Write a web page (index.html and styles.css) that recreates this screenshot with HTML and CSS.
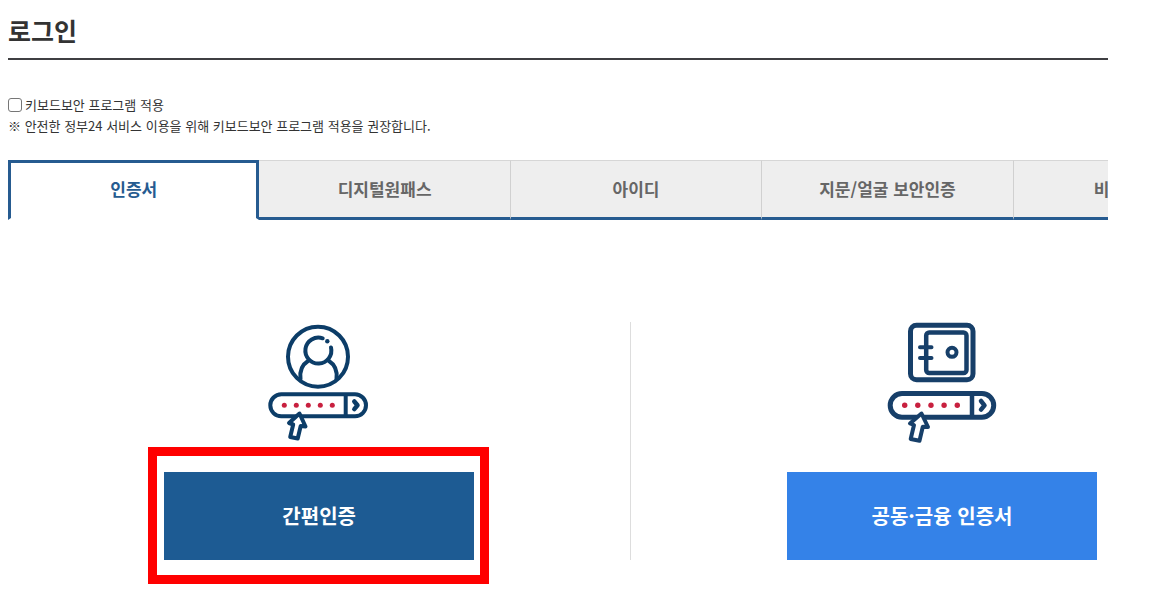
FILE: index.html
```html
<!DOCTYPE html>
<html lang="ko">
<head>
<meta charset="utf-8">
<title>로그인</title>
<link rel="stylesheet" href="styles.css">
</head>
<body>
<main class="page">
  <h1 class="title">로그인</h1>

  <div class="security">
    <label class="security-option"><input class="check" type="checkbox">키보드보안 프로그램 적용</label>
    <p class="security-note">※ 안전한 정부24 서비스 이용을 위해 키보드보안 프로그램 적용을 권장합니다.</p>
  </div>

  <nav class="tabs" role="tablist">
    <button class="tab tab-active" type="button" role="tab" aria-selected="true">인증서</button>
    <button class="tab" type="button" role="tab">디지털원패스</button>
    <button class="tab" type="button" role="tab">아이디</button>
    <button class="tab" type="button" role="tab">지문/얼굴 보안인증</button>
    <button class="tab tab-cut" type="button" role="tab">비</button>
  </nav>

  <div class="methods">
    <section class="method method-simple">
      <svg class="icon" viewBox="264 322 110 122" fill="none" stroke="#0c3d68" stroke-width="4" stroke-linecap="round" stroke-linejoin="round" aria-hidden="true">
        <circle cx="318" cy="356.7" r="30"/>
        <path d="M322.7 338.3A13 13 0 1 0 331 347.5"/>
        <circle cx="327.3" cy="341.3" r="2.2" fill="#0c3d68" stroke="none"/>
        <path d="M308 361C302.500 364.500 299.500 371 300.500 379M329 361C334.500 364.500 337.500 371 336.500 379"/>
        <rect x="270.300" y="394.300" width="95.700" height="22" rx="11"/>
        <path d="M345.700 395v21" stroke-linecap="butt"/>
        <path d="M354.300 401.500l3.200 3.800-3.200 3.800" stroke-width="4.500"/>
        <g fill="#c8203f" stroke="none">
          <circle cx="284.300" cy="405.300" r="2.500"/><circle cx="296.300" cy="405.300" r="2.500"/><circle cx="308.300" cy="405.300" r="2.500"/><circle cx="320.300" cy="405.300" r="2.500"/><circle cx="332.300" cy="405.300" r="2.500"/>
        </g>
        <path d="M299.500 413.500L289 423l4.200 1.500-3 12.500 7.500 1.500 3-12.500 4.800.5z" fill="#fff"/>
      </svg>
      <div class="action">
        <button class="method-button button-navy" type="button">간편인증</button>
        <span class="highlight"></span>
      </div>
    </section>

    <section class="method method-joint">
      <svg class="icon" viewBox="887 322 110 122" fill="none" stroke="#173f69" stroke-width="4" stroke-linecap="round" stroke-linejoin="round" aria-hidden="true">
        <rect x="910.500" y="325.200" width="62.500" height="54.500" rx="6" stroke-width="5"/>
        <rect x="926.200" y="332.500" width="40.300" height="40.500" rx="3" stroke-width="4.500"/>
        <circle cx="952" cy="352.300" r="4.500"/>
        <path d="M920 347.300h11.500M920 358h11.500"/>
        <rect x="890.200" y="393.500" width="103.500" height="23.700" rx="11.800" stroke-width="5"/>
        <path d="M972 394v23" stroke-linecap="butt" stroke-width="4.500"/>
        <path d="M981 401l3.500 4.300-3.500 4.300" stroke-width="4.500"/>
        <g fill="#c8203f" stroke="none">
          <circle cx="904.700" cy="405.300" r="2.700"/><circle cx="917.800" cy="405.300" r="2.700"/><circle cx="931" cy="405.300" r="2.700"/><circle cx="944.100" cy="405.300" r="2.700"/><circle cx="957.300" cy="405.300" r="2.700"/>
        </g>
        <path d="M921.500 413.500L910 423.500l4 1.500-3.300 14 8.800 1.800 3.300-14 5.200.2z" fill="#fff"/>
      </svg>
      <div class="action">
        <button class="method-button button-blue" type="button">공동·금융 인증서</button>
      </div>
    </section>
  </div>
</main>
</body>
</html>
```
FILE: styles.css
```css
* {
  box-sizing: border-box;
}

body {
  margin: 0;
  background: #fff;
  color: #333;
  font-family: "Noto Sans CJK KR", "Noto Sans", sans-serif;
}

button {
  margin: 0;
  padding: 0;
  border: 0;
  font: inherit;
  cursor: pointer;
}

.page {
  padding: 0 45px 36px 8px;
}

.title {
  margin: 0;
  padding: 12px 0 10px;
  border-bottom: 2px solid #3f3f42;
  font-size: 25px;
  font-weight: 700;
  line-height: 36px;
}

.security {
  padding: 34px 0 24px;
  font-size: 13px;
  line-height: 21px;
}

.security-option {
  display: flex;
  align-items: center;
  gap: 3px;
}

.check {
  appearance: none;
  width: 14px;
  height: 14px;
  margin: 0;
  border: 1px solid #767676;
  border-radius: 3px;
  background: #fff;
}

.check:checked {
  background: #1d5a92;
}

.security-note {
  margin: 0;
}

.tabs {
  display: grid;
  grid-template-columns: repeat(4, 8fr) 3fr;
}

.tab {
  height: 60px;
  padding-bottom: 2px;
  border-top: 1px solid #d6d6d6;
  border-right: 1px solid #d0d0d0;
  border-bottom: 3px solid #265b90;
  background: #eee;
  color: #666;
  font-size: 17px;
  font-weight: 700;
  white-space: nowrap;
}

.tab-active {
  padding-bottom: 4px;
  border: 3px solid #265b90;
  border-bottom-color: transparent;
  border-bottom-width: 2px;
  background: #fff;
  color: #265b90;
}

.tab-cut {
  overflow: hidden;
  padding-left: 80px;
  border-right: 0;
  text-align: left;
}

.methods {
  display: grid;
  grid-template-columns: 17fr 13fr;
  padding-top: 102px;
}

.method {
  display: flex;
  flex-direction: column;
  gap: 28px;
}

.method-simple {
  align-items: center;
  border-right: 1px solid #ddd;
}

.method-joint {
  align-items: flex-end;
  padding-right: 11px;
}

.icon {
  width: 110px;
  height: 122px;
}

.method-joint .icon {
  margin-right: 100px;
}

.action {
  position: relative;
}

.method-button {
  width: 310px;
  height: 88px;
  padding-bottom: 2px;
  color: #fff;
  font-size: 20px;
  font-weight: 700;
}

.button-navy {
  background: #1d5b93;
}

.button-blue {
  background: #3482e8;
}

/* Frame that marks the recommended method */
.highlight {
  position: absolute;
  inset: -25px -15px -24px -16px;
  border: 9px solid #f00;
  pointer-events: none;
}
```
